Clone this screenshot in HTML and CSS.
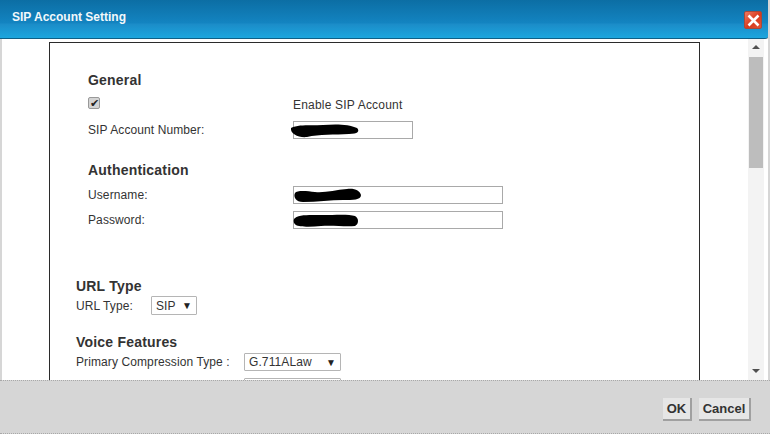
FILE: index.html
```html
<!DOCTYPE html>
<html lang="en">

<head>
    <meta charset="UTF-8">
    <title>SIP Account Setting</title>
    <link rel="stylesheet" href="styles.css">
</head>

<body>
    <div class="dialog">
        <div class="dialog-header">
            <span class="dialog-title">SIP Account Setting</span>
            <button class="close-button" aria-label="Close">
                <svg width="13" height="13" viewBox="0 0 13 13">
                    <path d="M1.5 1.5 L11.5 11.5 M11.5 1.5 L1.5 11.5" stroke="#fff" stroke-width="2.6" fill="none" />
                </svg>
            </button>
        </div>

        <div class="dialog-body">
            <div class="panel">
                <div class="section">
                    <h3>General</h3>
                    <div class="row row-check">
                        <label class="label"><input type="checkbox" class="check" checked></label>
                        <span>Enable SIP Account</span>
                    </div>
                    <div class="row">
                        <label class="label">SIP Account Number:</label>
                        <div class="field">
                            <input type="text" class="text-input short">
                            <svg class="scribble scribble-number" width="72" height="16" viewBox="0 0 72 16">
                                <path d="M2 6 C10 2 22 4 34 3 C46 2 60 2 68 6 C71 9 69 12 60 12 C46 13 30 12 18 15 C10 16 1 12 2 6 Z" fill="#000" />
                            </svg>
                        </div>
                    </div>
                </div>

                <div class="section section-auth">
                    <h3>Authentication</h3>
                    <div class="row">
                        <label class="label">Username:</label>
                        <div class="field">
                            <input type="text" class="text-input long">
                            <svg class="scribble" width="68" height="15" viewBox="0 0 68 15">
                                <path d="M2 5 C4 2 14 3 22 4 C32 5 42 2 54 1 C62 0 67 3 68 7 C68 12 60 12 50 12 C38 12 24 14 10 14 C3 14 0 9 2 5 Z" fill="#000" />
                            </svg>
                        </div>
                    </div>
                    <div class="row">
                        <label class="label">Password:</label>
                        <div class="field">
                            <input type="text" class="text-input long">
                            <svg class="scribble" width="66" height="15" viewBox="0 0 66 15">
                                <path d="M1 6 C4 1 18 2 30 2 C42 2 56 1 62 3 C66 5 66 11 62 13 C52 14 40 12 28 13 C18 14 6 14 3 12 C1 11 0 8 1 6 Z" fill="#000" />
                            </svg>
                        </div>
                    </div>
                </div>

                <div class="section-wide section-url">
                    <h3>URL Type</h3>
                    <div class="row row-url">
                        <label class="label-url">URL Type:</label>
                        <div class="select-box select-url">
                            <span>SIP</span>
                            <span class="arrow">&#9660;</span>
                        </div>
                    </div>
                </div>

                <div class="section-wide section-voice">
                    <h3>Voice Features</h3>
                    <div class="row row-codec">
                        <label class="label-voice">Primary Compression Type :</label>
                        <div class="select-box select-codec">
                            <span>G.711ALaw</span>
                            <span class="arrow">&#9660;</span>
                        </div>
                    </div>
                    <div class="row">
                        <label class="label-voice"></label>
                        <div class="select-box select-codec"></div>
                    </div>
                </div>
            </div>

            <div class="scrollbar">
                <span class="scroll-up"></span>
                <div class="scroll-track">
                    <div class="scroll-thumb"></div>
                </div>
                <span class="scroll-down"></span>
            </div>
        </div>

        <div class="dialog-footer">
            <button class="footer-button ok-button">OK</button>
            <button class="footer-button">Cancel</button>
        </div>
    </div>
</body>

</html>
```

FILE: styles.css
```css
* {
    box-sizing: border-box;
}

html, body {
    margin: 0;
    height: 100%;
    overflow: hidden;
}

body {
    background-color: #d6d6d6;
    font-family: "Liberation Sans", Arial, sans-serif;
    font-size: 12px;
    color: #333;
}

.dialog {
    width: 770px;
    height: 434px;
    display: flex;
    flex-direction: column;
    padding-right: 2px;
}

.dialog-header {
    height: 39px;
    flex: none;
    display: flex;
    align-items: center;
    justify-content: space-between;
    padding: 0 6px 0 12px;
    background: linear-gradient(#0c6ea4 0, #1384c1 23px, #1b8cc8 24px, #1ca6de 38px);
    border-bottom: 1px solid #0f5f86;
    border-radius: 0 0 3px 0;
}

.dialog-title {
    font-size: 12px;
    font-weight: bold;
    color: #f2f8fb;
    position: relative;
    top: -2px;
}

.close-button {
    width: 18px;
    height: 18px;
    padding: 0;
    margin-top: 2px;
    display: flex;
    align-items: center;
    justify-content: center;
    background: linear-gradient(135deg, #ef7a62, #d8391c 55%, #e0563a);
    border: 1px solid #a8493a;
    border-radius: 2px;
}

.dialog-body {
    height: 341px;
    flex: none;
    display: flex;
    background-color: #fff;
    border-left: 2px solid #d6d6d6;
    overflow: hidden;
}

.panel {
    width: 651px;
    height: 360px;
    flex: none;
    margin: 3px 0 0 47px;
    border: 1px solid #2b2b2b;
    padding-top: 29px;
}

.section {
    padding-left: 38px;
}

.section-auth {
    margin-top: 23px;
}

.section-auth h3 + .row {
    margin-top: 8px;
}

.section-wide {
    padding-left: 26px;
}

.section-url {
    margin-top: 49px;
}

.section-voice {
    margin-top: 19px;
}

h3 {
    margin: 0;
    font-size: 14px;
    line-height: 16px;
    font-weight: bold;
    letter-spacing: 0.2px;
    color: #333;
}

.row {
    display: flex;
    align-items: center;
    margin-top: 7px;
    letter-spacing: 0.1px;
}

.row-check {
    margin-top: 0;
    margin-bottom: 9px;
    height: 24px;
}

.row-check + .row {
    margin-top: 0;
}

.row-check span {
    padding-top: 9px;
    letter-spacing: 0.2px;
}

.row-url {
    margin-top: 2px;
}

.row-codec {
    margin-top: 3px;
}

.label {
    width: 205px;
    flex: none;
}

.label-url {
    width: 75px;
    flex: none;
}

.label-voice {
    width: 168px;
    flex: none;
}

.check {
    appearance: none;
    display: block;
    width: 12px;
    height: 12px;
    margin: 6px 0 0;
    background-color: #d4d4d4;
    border: 1px solid #999;
    border-radius: 2px;
    font-size: 11px;
    line-height: 10px;
    text-align: center;
    color: #222;
}

.check::after {
    content: "\2714";
}

.field {
    position: relative;
}

.text-input {
    display: block;
    height: 18px;
    padding: 0 2px;
    background-color: #fff;
    border: 1px solid #a9a9a9;
}

.short {
    width: 120px;
}

.long {
    width: 210px;
}

/* redaction marks over the values */
.scribble {
    position: absolute;
    left: 0;
    top: 2px;
}

.scribble-number {
    left: -4px;
    top: 1px;
}

.select-box {
    height: 18px;
    display: flex;
    align-items: center;
    justify-content: space-between;
    background-color: #fff;
    border: 1px solid #b5b5b5;
    border-radius: 1px;
    padding: 0 4px;
    color: #333;
}

.select-url {
    width: 46px;
    height: 19px;
}

.select-codec {
    width: 97px;
}

.arrow {
    font-size: 10px;
    color: #222;
}

.scrollbar {
    width: 16px;
    flex: none;
    margin-left: 48px;
    display: flex;
    flex-direction: column;
    align-items: center;
    background-color: #f3f3f3;
    padding-top: 6px;
}

.scroll-up, .scroll-down {
    width: 0;
    height: 0;
    flex: none;
    border-left: 4px solid transparent;
    border-right: 4px solid transparent;
}

.scroll-up {
    border-bottom: 4px solid #505050;
}

.scroll-down {
    border-top: 4px solid #505050;
    margin-bottom: 7px;
}

.scroll-track {
    flex: 1;
    width: 100%;
    padding: 8px 1px 0;
}

.scroll-thumb {
    height: 111px;
    background-color: #bdbdbd;
}

.dialog-footer {
    flex: 1;
    display: flex;
    justify-content: flex-end;
    align-items: flex-start;
    gap: 7px;
    padding: 17px 19px 0 0;
    margin-right: -2px;
    background-color: #d6d6d6;
    border-top: 1px dotted #a8a8a8;
    border-bottom: 1px dotted #a8a8a8;
}

.footer-button {
    height: 23px;
    width: 52px;
    padding: 0;
    font-family: "Liberation Sans", Arial, sans-serif;
    font-size: 13px;
    font-weight: bold;
    color: #333;
    background-color: #e6e6e6;
    border: none;
    border-right: 2px solid #a0a0a0;
    border-bottom: 2px solid #a0a0a0;
}

.ok-button {
    width: 29px;
}
```
